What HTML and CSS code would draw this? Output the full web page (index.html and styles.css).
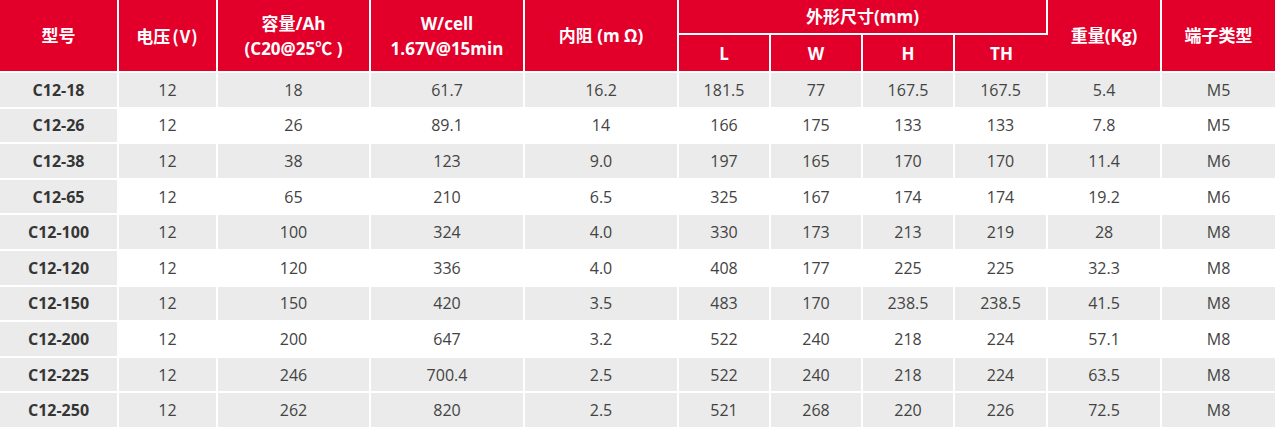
FILE: index.html
```html
<!DOCTYPE html>
<html lang="zh">
<head>
<meta charset="utf-8">
<title>规格表</title>
<link rel="stylesheet" href="styles.css">
</head>
<body>
<table class="spec">
  <colgroup>
    <col class="c-model"><col class="c-volt"><col class="c-cap"><col class="c-w"><col class="c-r">
    <col class="c-d"><col class="c-d"><col class="c-d"><col class="c-d2">
    <col class="c-kg"><col class="c-term">
  </colgroup>
  <thead>
    <tr class="h1">
      <th rowspan="2">型号</th>
      <th rowspan="2">电压<span class="wide">(V)</span></th>
      <th rowspan="2">容量/Ah<br>(C20@25℃ )</th>
      <th rowspan="2">W/cell<br>1.67V@15min</th>
      <th rowspan="2">内阻 (m Ω)</th>
      <th colspan="4">外形尺寸(mm)</th>
      <th rowspan="2">重量(Kg)</th>
      <th rowspan="2" class="last">端子类型</th>
    </tr>
    <tr class="h2">
      <th>L</th><th>W</th><th>H</th><th>TH</th>
    </tr>
  </thead>
  <tbody>
    <tr class="g"><td>C12-18</td><td>12</td><td>18</td><td>61.7</td><td>16.2</td><td>181.5</td><td>77</td><td>167.5</td><td>167.5</td><td>5.4</td><td>M5</td></tr>
    <tr><td>C12-26</td><td>12</td><td>26</td><td>89.1</td><td>14</td><td>166</td><td>175</td><td>133</td><td>133</td><td>7.8</td><td>M5</td></tr>
    <tr class="g"><td>C12-38</td><td>12</td><td>38</td><td>123</td><td>9.0</td><td>197</td><td>165</td><td>170</td><td>170</td><td>11.4</td><td>M6</td></tr>
    <tr><td>C12-65</td><td>12</td><td>65</td><td>210</td><td>6.5</td><td>325</td><td>167</td><td>174</td><td>174</td><td>19.2</td><td>M6</td></tr>
    <tr class="g"><td>C12-100</td><td>12</td><td>100</td><td>324</td><td>4.0</td><td>330</td><td>173</td><td>213</td><td>219</td><td>28</td><td>M8</td></tr>
    <tr><td>C12-120</td><td>12</td><td>120</td><td>336</td><td>4.0</td><td>408</td><td>177</td><td>225</td><td>225</td><td>32.3</td><td>M8</td></tr>
    <tr class="g"><td>C12-150</td><td>12</td><td>150</td><td>420</td><td>3.5</td><td>483</td><td>170</td><td>238.5</td><td>238.5</td><td>41.5</td><td>M8</td></tr>
    <tr><td>C12-200</td><td>12</td><td>200</td><td>647</td><td>3.2</td><td>522</td><td>240</td><td>218</td><td>224</td><td>57.1</td><td>M8</td></tr>
    <tr class="g"><td>C12-225</td><td>12</td><td>246</td><td>700.4</td><td>2.5</td><td>522</td><td>240</td><td>218</td><td>224</td><td>63.5</td><td>M8</td></tr>
    <tr class="g"><td>C12-250</td><td>12</td><td>262</td><td>820</td><td>2.5</td><td>521</td><td>268</td><td>220</td><td>226</td><td>72.5</td><td>M8</td></tr>
  </tbody>
</table>
</body>
</html>
```
FILE: styles.css
```css
html, body {
  margin: 0;
  padding: 0;
  background: #ffffff;
}
body {
  font-family: "Open Sans", "Noto Sans CJK SC", sans-serif;
  color: #434343;
}
.spec {
  width: 1275px;
  border-collapse: separate;
  border-spacing: 0;
  table-layout: fixed;
}
.c-model { width: 119px; }
.c-volt { width: 99px; }
.c-cap { width: 153px; }
.c-w { width: 154px; }
.c-r { width: 154px; }
.c-d { width: 92px; }
.c-d2 { width: 93px; }
.c-kg { width: 114px; }
.c-term { width: 113px; }

.spec th, .spec td {
  box-sizing: border-box;
  padding: 0;
  text-align: center;
  vertical-align: middle;
  border-right: 2px solid #ffffff;
  border-bottom: 2px solid #ffffff;
}
.spec th:last-child, .spec td:last-child { border-right: 0; }
.spec tr.h1 th.last { border-right: 0; }

.spec th {
  background: #e2002b;
  color: #ffffff;
  font-size: 17px;
  font-weight: 700;
  line-height: 25px;
}
.spec th .wide {
  font-family: "Noto Sans CJK SC", sans-serif;
  margin-left: 2px;
  letter-spacing: 1px;
}
.spec tr.h1 { height: 35px; }
.spec tr.h2 { height: 38px; }

.spec td {
  height: 35.6px;
  font-size: 16px;
  line-height: 20px;
}
.spec td:first-child {
  background: #eaebea;
  font-weight: 700;
  color: #353535;
}
.spec tr.g td { background: #eaebea; }
```
